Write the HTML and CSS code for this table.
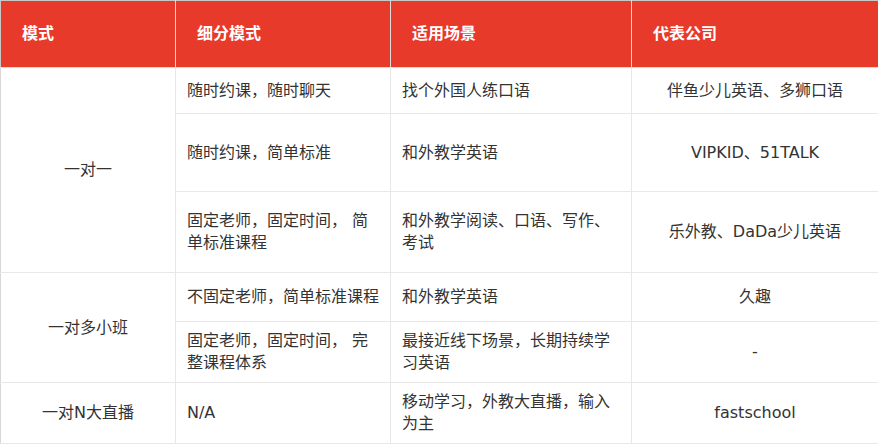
FILE: index.html
```html
<!DOCTYPE html>
<html lang="zh-CN">
<head>
<meta charset="utf-8">
<link rel="stylesheet" href="styles.css">
</head>
<body>
<table class="grid">
  <colgroup>
    <col class="c1"><col class="c2"><col class="c3"><col class="c4">
  </colgroup>
  <thead>
    <tr class="head">
      <th>模式</th><th>细分模式</th><th>适用场景</th><th>代表公司</th>
    </tr>
  </thead>
  <tbody>
    <tr class="r1">
      <td class="mode" rowspan="3">一对一</td>
      <td>随时约课，随时聊天</td>
      <td>找个外国人练口语</td>
      <td class="co">伴鱼少儿英语、多狮口语</td>
    </tr>
    <tr class="r2">
      <td>随时约课，简单标准</td>
      <td>和外教学英语</td>
      <td class="co">VIPKID、51TALK</td>
    </tr>
    <tr class="r3">
      <td>固定老师，固定时间， 简单标准课程</td>
      <td>和外教学阅读、口语、写作、考试</td>
      <td class="co">乐外教、DaDa少儿英语</td>
    </tr>
    <tr class="r4">
      <td class="mode" rowspan="2">一对多小班</td>
      <td>不固定老师，简单标准课程</td>
      <td>和外教学英语</td>
      <td class="co">久趣</td>
    </tr>
    <tr class="r5">
      <td>固定老师，固定时间， 完整课程体系</td>
      <td>最接近线下场景，长期持续学习英语</td>
      <td class="co">-</td>
    </tr>
    <tr class="r6">
      <td class="mode">一对N大直播</td>
      <td>N/A</td>
      <td>移动学习，外教大直播，输入为主</td>
      <td class="co">fastschool</td>
    </tr>
  </tbody>
</table>
</body>
</html>
```

FILE: styles.css
```css
html, body {
  margin: 0;
  padding: 0;
  background: #ffffff;
}

.grid {
  width: 878px;
  table-layout: fixed;
  border-collapse: collapse;
  font-family: "DejaVu Sans", "Noto Sans CJK SC", sans-serif;
  font-size: 16px;
  line-height: 22px;
  color: #333333;
}

.c1 { width: 175px; }
.c2 { width: 215px; }
.c3 { width: 241px; }
.c4 { width: 247px; }

.head {
  height: 67px;
}

.head th {
  background: #e83a2b;
  color: #ffffff;
  font-weight: bold;
  text-align: left;
  padding: 0 0 0 21px;
  border: 1px solid #dcdcdc;
  border-top-color: #c8c8c8;
  vertical-align: middle;
}

.head th:first-child {
  border-left-color: #c8c8c8;
}

.grid td {
  border: 1px solid #e8e8e8;
  padding: 0 11px;
  vertical-align: middle;
  text-align: left;
}

.grid td.mode,
.grid td.co {
  text-align: center;
}

.grid td.mode {
  border-left-color: #d8d8d8;
}

.r1 { height: 46px; }
.r2 { height: 78px; }
.r3 { height: 81px; }
.r4 { height: 49px; }
.r5 { height: 61px; }
.r6 { height: 61px; }
```
